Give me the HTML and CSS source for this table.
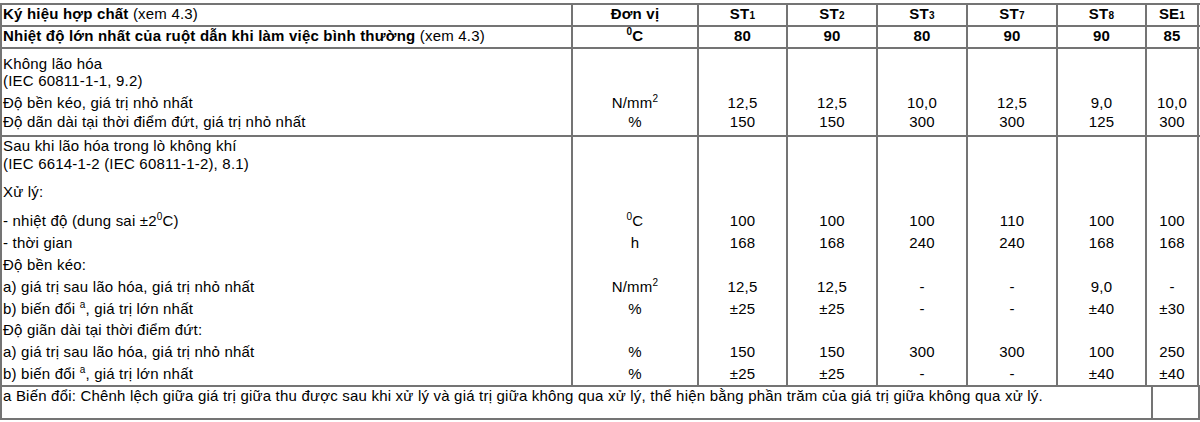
FILE: index.html
```html
<!DOCTYPE html>
<html lang="vi">
<head>
<meta charset="utf-8">
<title>Bảng</title>
<link rel="stylesheet" href="styles.css">
</head>
<body>
<div class="tbl">
  <div class="sec head">
    <div class="c l"><b>Ký hiệu hợp chất</b> (xem 4.3)</div>
    <div class="c"><b>Đơn vị</b></div>
    <div class="c"><b>ST<span class="sub">1</span></b></div>
    <div class="c"><b>ST<span class="sub">2</span></b></div>
    <div class="c"><b>ST<span class="sub">3</span></b></div>
    <div class="c"><b>ST<span class="sub">7</span></b></div>
    <div class="c"><b>ST<span class="sub">8</span></b></div>
    <div class="c"><b>SE<span class="sub">1</span></b></div>
  </div>
  <div class="sec head">
    <div class="c l"><b>Nhiệt độ lớn nhất của ruột dẫn khi làm việc bình thường</b> (xem 4.3)</div>
    <div class="c"><b><sup>0</sup>C</b></div>
    <div class="c"><b>80</b></div>
    <div class="c"><b>90</b></div>
    <div class="c"><b>80</b></div>
    <div class="c"><b>90</b></div>
    <div class="c"><b>90</b></div>
    <div class="c"><b>85</b></div>
  </div>
  <div class="sec s1">
    <div class="c l first">Không lão hóa</div>
    <div class="c"></div><div class="c"></div><div class="c"></div><div class="c"></div><div class="c"></div><div class="c"></div><div class="c"></div>
    <div class="c l">(IEC 60811-1-1, 9.2)</div>
    <div class="c"></div><div class="c"></div><div class="c"></div><div class="c"></div><div class="c"></div><div class="c"></div><div class="c"></div>
    <div class="c l">Độ bền kéo, giá trị nhỏ nhất</div>
    <div class="c">N/mm<sup>2</sup></div>
    <div class="c">12,5</div><div class="c">12,5</div><div class="c">10,0</div><div class="c">12,5</div><div class="c">9,0</div><div class="c">10,0</div>
    <div class="c l">Độ dãn dài tại thời điểm đứt, giá trị nhỏ nhất</div>
    <div class="c">%</div>
    <div class="c">150</div><div class="c">150</div><div class="c">300</div><div class="c">300</div><div class="c">125</div><div class="c">300</div>
  </div>
  <div class="sec s2">
    <div class="c l">Sau khi lão hóa trong lò không khí</div>
    <div class="c"></div><div class="c"></div><div class="c"></div><div class="c"></div><div class="c"></div><div class="c"></div><div class="c"></div>
    <div class="c l">(IEC 6614-1-2 (IEC 60811-1-2), 8.1)</div>
    <div class="c"></div><div class="c"></div><div class="c"></div><div class="c"></div><div class="c"></div><div class="c"></div><div class="c"></div>
    <div class="c l">Xử lý:</div>
    <div class="c"></div><div class="c"></div><div class="c"></div><div class="c"></div><div class="c"></div><div class="c"></div><div class="c"></div>
    <div class="c l">- nhiệt độ (dung sai ±2<sup>0</sup>C)</div>
    <div class="c"><sup>0</sup>C</div>
    <div class="c">100</div><div class="c">100</div><div class="c">100</div><div class="c">110</div><div class="c">100</div><div class="c">100</div>
    <div class="c l">- thời gian</div>
    <div class="c">h</div>
    <div class="c">168</div><div class="c">168</div><div class="c">240</div><div class="c">240</div><div class="c">168</div><div class="c">168</div>
    <div class="c l">Độ bền kéo:</div>
    <div class="c"></div><div class="c"></div><div class="c"></div><div class="c"></div><div class="c"></div><div class="c"></div><div class="c"></div>
    <div class="c l">a) giá trị sau lão hóa, giá trị nhỏ nhất</div>
    <div class="c">N/mm<sup>2</sup></div>
    <div class="c">12,5</div><div class="c">12,5</div><div class="c">-</div><div class="c">-</div><div class="c">9,0</div><div class="c">-</div>
    <div class="c l">b) biến đổi <sup>a</sup>, giá trị lớn nhất</div>
    <div class="c">%</div>
    <div class="c">±25</div><div class="c">±25</div><div class="c">-</div><div class="c">-</div><div class="c">±40</div><div class="c">±30</div>
    <div class="c l">Độ giãn dài tại thời điểm đứt:</div>
    <div class="c"></div><div class="c"></div><div class="c"></div><div class="c"></div><div class="c"></div><div class="c"></div><div class="c"></div>
    <div class="c l">a) giá trị sau lão hóa, giá trị nhỏ nhất</div>
    <div class="c">%</div>
    <div class="c">150</div><div class="c">150</div><div class="c">300</div><div class="c">300</div><div class="c">100</div><div class="c">250</div>
    <div class="c l">b) biến đổi <sup>a</sup>, giá trị lớn nhất</div>
    <div class="c">%</div>
    <div class="c">±25</div><div class="c">±25</div><div class="c">-</div><div class="c">-</div><div class="c">±40</div><div class="c">±40</div>
  </div>
  <div class="sec foot">
    <div class="c l">a Biến đổi: Chênh lệch giữa giá trị giữa thu được sau khi xử lý và giá trị giữa không qua xử lý, thể hiện bằng phần trăm của giá trị giữa không qua xử lý.</div>
    <div class="c"></div>
  </div>
</div>
</body>
</html>
```
FILE: styles.css
```css
html, body {
  margin: 0;
  padding: 0;
  background: #ffffff;
}
body {
  padding-top: 3px;
  font-family: "Liberation Sans", Arial, sans-serif;
  font-size: 15px;
  letter-spacing: 0.2px;
  color: #000000;
}
.tbl {
  width: 1200px;
  box-sizing: border-box;
  border-left: 2px solid #747474;
  border-top: 2px solid #747474;
}
.sec {
  display: grid;
  grid-template-columns: 571px 126px 89px 90px 90px 90px 89px 52px;
  border-bottom: 2px solid #747474;
}
.c {
  box-sizing: border-box;
  border-right: 2px solid #747474;
  line-height: 17px;
  text-align: center;
  white-space: nowrap;
  overflow: visible;
}
.c.l {
  text-align: left;
  padding-left: 1px;
}
.head {
  grid-template-rows: 20px;
}
.s1 {
  grid-template-rows: 23px 22px 19px 22px;
}
.s1 > .first {
  padding-top: 6px;
}
.s2 {
  grid-template-rows: 18px 28px 29px 22px 22px 22px 22px 21px 22px 22px 20px;
}
.foot {
  grid-template-columns: 1151px 47px;
  grid-template-rows: 31px;
}
sup {
  font-size: 10px;
  line-height: 0;
  vertical-align: 6px;
}
.sub {
  font-size: 10px;
  vertical-align: baseline;
}
```
